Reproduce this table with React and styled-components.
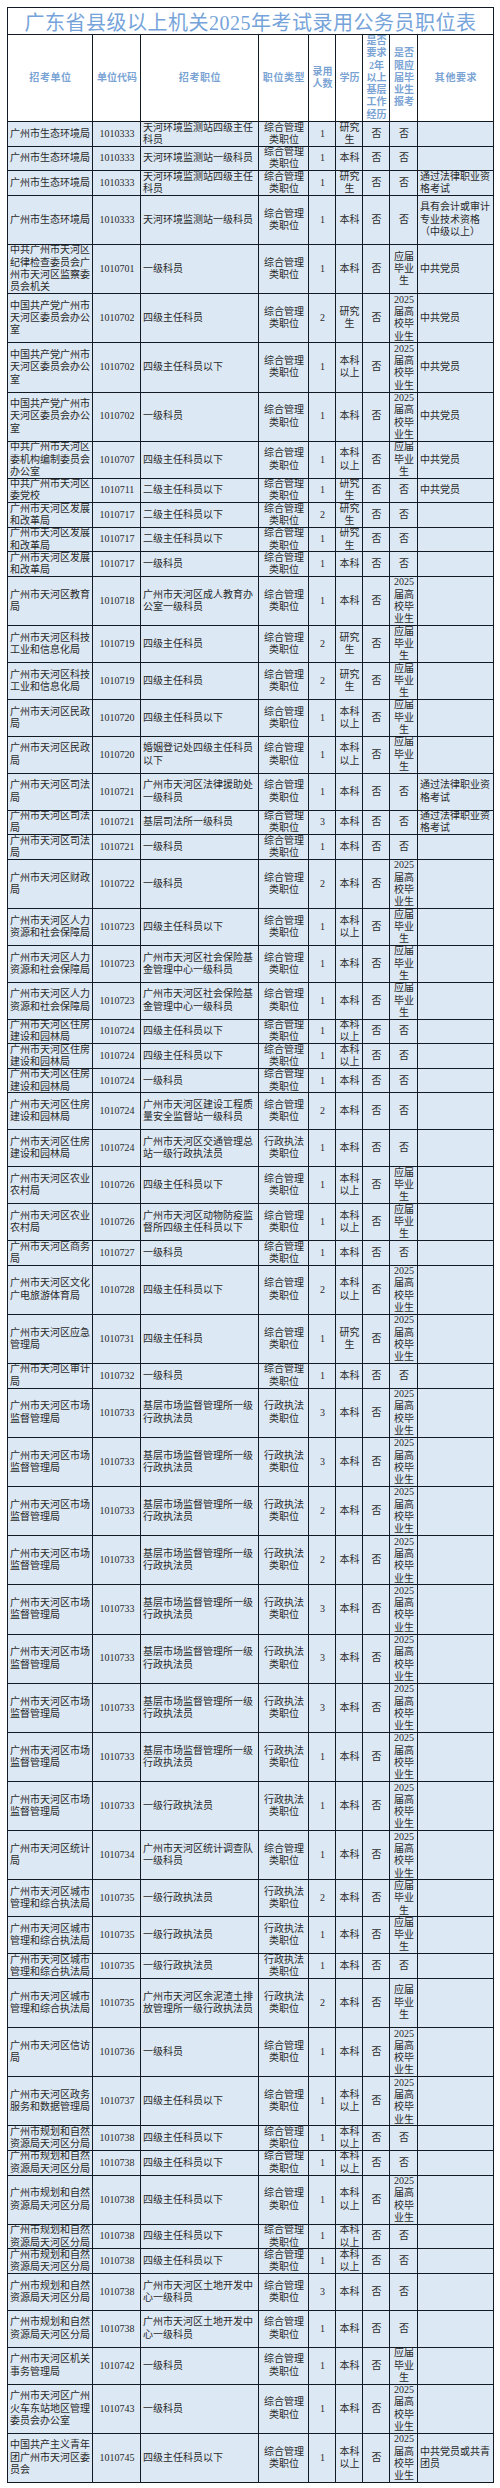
import React from 'react';
import styled, { createGlobalStyle } from 'styled-components';

const GlobalStyle = createGlobalStyle`
  body {
    margin: 0;
    background: #fff;
    font-family: "Liberation Serif", "Noto Sans CJK SC", serif;
  }
`;

const LINE = 12.3;
const COLS = '85px 48px 118px 50px 27px 27px 27px 28px 76px';
const INK = '#121b24';

const Page = styled.div`
  padding: 7px 0 0 7px;
`;

const Sheet = styled.div`
  width: 486px;
  border-left: 1px solid ${INK};
  border-top: 1px solid ${INK};
`;

const Title = styled.div`
  box-sizing: border-box;
  height: 27px;
  border-right: 1px solid ${INK};
  border-bottom: 1px solid ${INK};
  display: flex;
  align-items: center;
  justify-content: center;
  font-size: 20px;
  letter-spacing: 0.5px;
  color: #76a4da;
`;

const Row = styled.div`
  display: grid;
  grid-template-columns: ${COLS};
  height: ${p => p.$h}px;
  background: ${p => (p.$head ? '#fff' : '#dce8f4')};
`;

const Cell = styled.div`
  box-sizing: border-box;
  min-width: 0;
  border-right: 1px solid ${INK};
  border-bottom: 1px solid ${INK};
  display: flex;
  align-items: center;
  justify-content: ${p => (p.$left ? 'flex-start' : 'center')};
  text-align: ${p => (p.$left ? 'left' : 'center')};
  padding: 0 1px 0 2px;
  overflow: hidden;
  font-size: 10px;
  line-height: ${LINE}px;
  color: #2a2a2a;
`;

const HeadCell = styled(Cell)`
  font-weight: 700;
  color: #7ba4d4;
  letter-spacing: ${p => (p.$wide ? '0.6px' : '0')};
`;

const ZH = '综合管理类职位';
const XZ = '行政执法类职位';
const YJ = '应届毕业生';
const G25 = '2025届高校毕业生';
const N = '否';
const FK = '通过法律职业资格考试';
const DB = '中国共产党广州市天河区委员会办公室';
const FG = '广州市天河区发展和改革局';
const KJ = '广州市天河区科技工业和信息化局';
const MZ = '广州市天河区民政局';
const SF = '广州市天河区司法局';
const RS = '广州市天河区人力资源和社会保障局';
const ZF = '广州市天河区住房建设和园林局';
const NY = '广州市天河区农业农村局';
const SC = '广州市天河区市场监督管理局';
const CG = '广州市天河区城市管理和综合执法局';
const GH = '广州市规划和自然资源局天河区分局';
const JC = '基层市场监督管理所一级行政执法员';

// [unit, code, post, type, num, edu, base, grad, other, lines]
const rows = [
  ['广州市生态环境局', '1010333', '天河环境监测站四级主任科员', ZH, 1, '研究生', N, N, '', 2],
  ['广州市生态环境局', '1010333', '天河环境监测站一级科员', ZH, 1, '本科', N, N, '', 2],
  ['广州市生态环境局', '1010333', '天河环境监测站四级主任科员', ZH, 1, '研究生', N, N, FK, 2],
  ['广州市生态环境局', '1010333', '天河环境监测站一级科员', ZH, 1, '本科', N, N, '具有会计或审计专业技术资格（中级以上）', 4],
  ['中共广州市天河区纪律检查委员会广州市天河区监察委员会机关', '1010701', '一级科员', ZH, 1, '本科', N, YJ, '中共党员', 4],
  [DB, '1010702', '四级主任科员', ZH, 2, '研究生', N, G25, '中共党员', 4],
  [DB, '1010702', '四级主任科员以下', ZH, 1, '本科以上', N, G25, '中共党员', 4],
  [DB, '1010702', '一级科员', ZH, 1, '本科', N, G25, '中共党员', 4],
  ['中共广州市天河区委机构编制委员会办公室', '1010707', '四级主任科员以下', ZH, 1, '本科以上', N, YJ, '中共党员', 3],
  ['中共广州市天河区委党校', '1010711', '二级主任科员以下', ZH, 1, '研究生', N, N, '中共党员', 2],
  [FG, '1010717', '二级主任科员以下', ZH, 2, '研究生', N, N, '', 2],
  [FG, '1010717', '二级主任科员以下', ZH, 1, '研究生', N, N, '', 2],
  [FG, '1010717', '一级科员', ZH, 1, '本科', N, N, '', 2],
  ['广州市天河区教育局', '1010718', '广州市天河区成人教育办公室一级科员', ZH, 1, '本科', N, G25, '', 4],
  [KJ, '1010719', '四级主任科员', ZH, 2, '研究生', N, YJ, '', 3],
  [KJ, '1010719', '四级主任科员', ZH, 2, '研究生', N, YJ, '', 3],
  [MZ, '1010720', '四级主任科员以下', ZH, 1, '本科以上', N, YJ, '', 3],
  [MZ, '1010720', '婚姻登记处四级主任科员以下', ZH, 1, '本科以上', N, YJ, '', 3],
  [SF, '1010721', '广州市天河区法律援助处一级科员', ZH, 1, '本科', N, N, FK, 3],
  [SF, '1010721', '基层司法所一级科员', ZH, 3, '本科', N, N, FK, 2],
  [SF, '1010721', '一级科员', ZH, 1, '本科', N, N, '', 2],
  ['广州市天河区财政局', '1010722', '一级科员', ZH, 2, '本科', N, G25, '', 4],
  [RS, '1010723', '四级主任科员以下', ZH, 1, '本科以上', N, YJ, '', 3],
  [RS, '1010723', '广州市天河区社会保险基金管理中心一级科员', ZH, 1, '本科', N, YJ, '', 3],
  [RS, '1010723', '广州市天河区社会保险基金管理中心一级科员', ZH, 1, '本科', N, YJ, '', 3],
  [ZF, '1010724', '四级主任科员以下', ZH, 1, '本科以上', N, N, '', 2],
  [ZF, '1010724', '四级主任科员以下', ZH, 1, '本科以上', N, N, '', 2],
  [ZF, '1010724', '一级科员', ZH, 1, '本科', N, N, '', 2],
  [ZF, '1010724', '广州市天河区建设工程质量安全监督站一级科员', ZH, 2, '本科', N, N, '', 3],
  [ZF, '1010724', '广州市天河区交通管理总站一级行政执法员', XZ, 1, '本科', N, N, '', 3],
  [NY, '1010726', '四级主任科员以下', ZH, 1, '本科以上', N, YJ, '', 3],
  [NY, '1010726', '广州市天河区动物防疫监督所四级主任科员以下', ZH, 1, '本科以上', N, YJ, '', 3],
  ['广州市天河区商务局', '1010727', '一级科员', ZH, 1, '本科', N, N, '', 2],
  ['广州市天河区文化广电旅游体育局', '1010728', '四级主任科员以下', ZH, 2, '本科以上', N, G25, '', 4],
  ['广州市天河区应急管理局', '1010731', '四级主任科员', ZH, 1, '研究生', N, G25, '', 4],
  ['广州市天河区审计局', '1010732', '一级科员', ZH, 1, '本科', N, N, '', 2],
  ...[3, 3, 2, 2, 3, 3, 3, 1].map(n => [SC, '1010733', JC, XZ, n, '本科', N, G25, '', 4]),
  [SC, '1010733', '一级行政执法员', XZ, 1, '本科', N, G25, '', 4],
  ['广州市天河区统计局', '1010734', '广州市天河区统计调查队一级科员', ZH, 1, '本科', N, G25, '', 4],
  [CG, '1010735', '一级行政执法员', XZ, 2, '本科', N, YJ, '', 3],
  [CG, '1010735', '一级行政执法员', XZ, 1, '本科', N, YJ, '', 3],
  [CG, '1010735', '一级行政执法员', XZ, 1, '本科', N, N, '', 2],
  [CG, '1010735', '广州市天河区余泥渣土排放管理所一级行政执法员', XZ, 2, '本科', N, YJ, '', 4],
  ['广州市天河区信访局', '1010736', '一级科员', ZH, 1, '本科', N, G25, '', 4],
  ['广州市天河区政务服务和数据管理局', '1010737', '四级主任科员以下', ZH, 1, '本科以上', N, G25, '', 4],
  [GH, '1010738', '四级主任科员以下', ZH, 1, '本科以上', N, N, '', 2],
  [GH, '1010738', '四级主任科员以下', ZH, 1, '本科以上', N, N, '', 2],
  [GH, '1010738', '四级主任科员以下', ZH, 1, '本科以上', N, G25, '', 4],
  [GH, '1010738', '四级主任科员以下', ZH, 1, '本科以上', N, N, '', 2],
  [GH, '1010738', '四级主任科员以下', ZH, 1, '本科以上', N, N, '', 2],
  [GH, '1010738', '广州市天河区土地开发中心一级科员', ZH, 3, '本科', N, N, '', 3],
  [GH, '1010738', '广州市天河区土地开发中心一级科员', ZH, 1, '本科', N, N, '', 3],
  ['广州市天河区机关事务管理局', '1010742', '一级科员', ZH, 1, '本科', N, YJ, '', 3],
  ['广州市天河区广州火车东站地区管理委员会办公室', '1010743', '一级科员', ZH, 1, '本科', N, G25, '', 4],
  ['中国共产主义青年团广州市天河区委员会', '1010745', '四级主任科员以下', ZH, 1, '本科以上', N, G25, '中共党员或共青团员', 4],
];

const lines = (...parts) =>
  parts.map((p, i) => (
    <React.Fragment key={i}>
      {i > 0 && <br />}
      {p}
    </React.Fragment>
  ));

function Header() {
  return (
    <Row $head $h={87}>
      <HeadCell $wide>招考单位</HeadCell>
      <HeadCell>单位代码</HeadCell>
      <HeadCell $wide>招考职位</HeadCell>
      <HeadCell $wide>职位类型</HeadCell>
      <HeadCell>{lines('录用', '人数')}</HeadCell>
      <HeadCell>学历</HeadCell>
      <HeadCell>{lines('是否', '要求', '2年', '以上', '基层', '工作', '经历')}</HeadCell>
      <HeadCell>{lines('是否', '限应', '届毕', '业生', '报考')}</HeadCell>
      <HeadCell $wide>其他要求</HeadCell>
    </Row>
  );
}

function JobRow({ r }) {
  const [unit, code, post, type, num, edu, base, grad, other, n] = r;
  return (
    <Row $h={n * LINE}>
      <Cell $left>{unit}</Cell>
      <Cell>{code}</Cell>
      <Cell $left>{post}</Cell>
      <Cell>{type}</Cell>
      <Cell>{num}</Cell>
      <Cell>{edu}</Cell>
      <Cell>{base}</Cell>
      <Cell>{grad}</Cell>
      <Cell $left>{other}</Cell>
    </Row>
  );
}

export default function App() {
  return (
    <Page>
      <GlobalStyle />
      <Sheet>
        <Title>广东省县级以上机关2025年考试录用公务员职位表</Title>
        <Header />
        {rows.map((r, i) => (
          <JobRow key={i} r={r} />
        ))}
      </Sheet>
    </Page>
  );
}
